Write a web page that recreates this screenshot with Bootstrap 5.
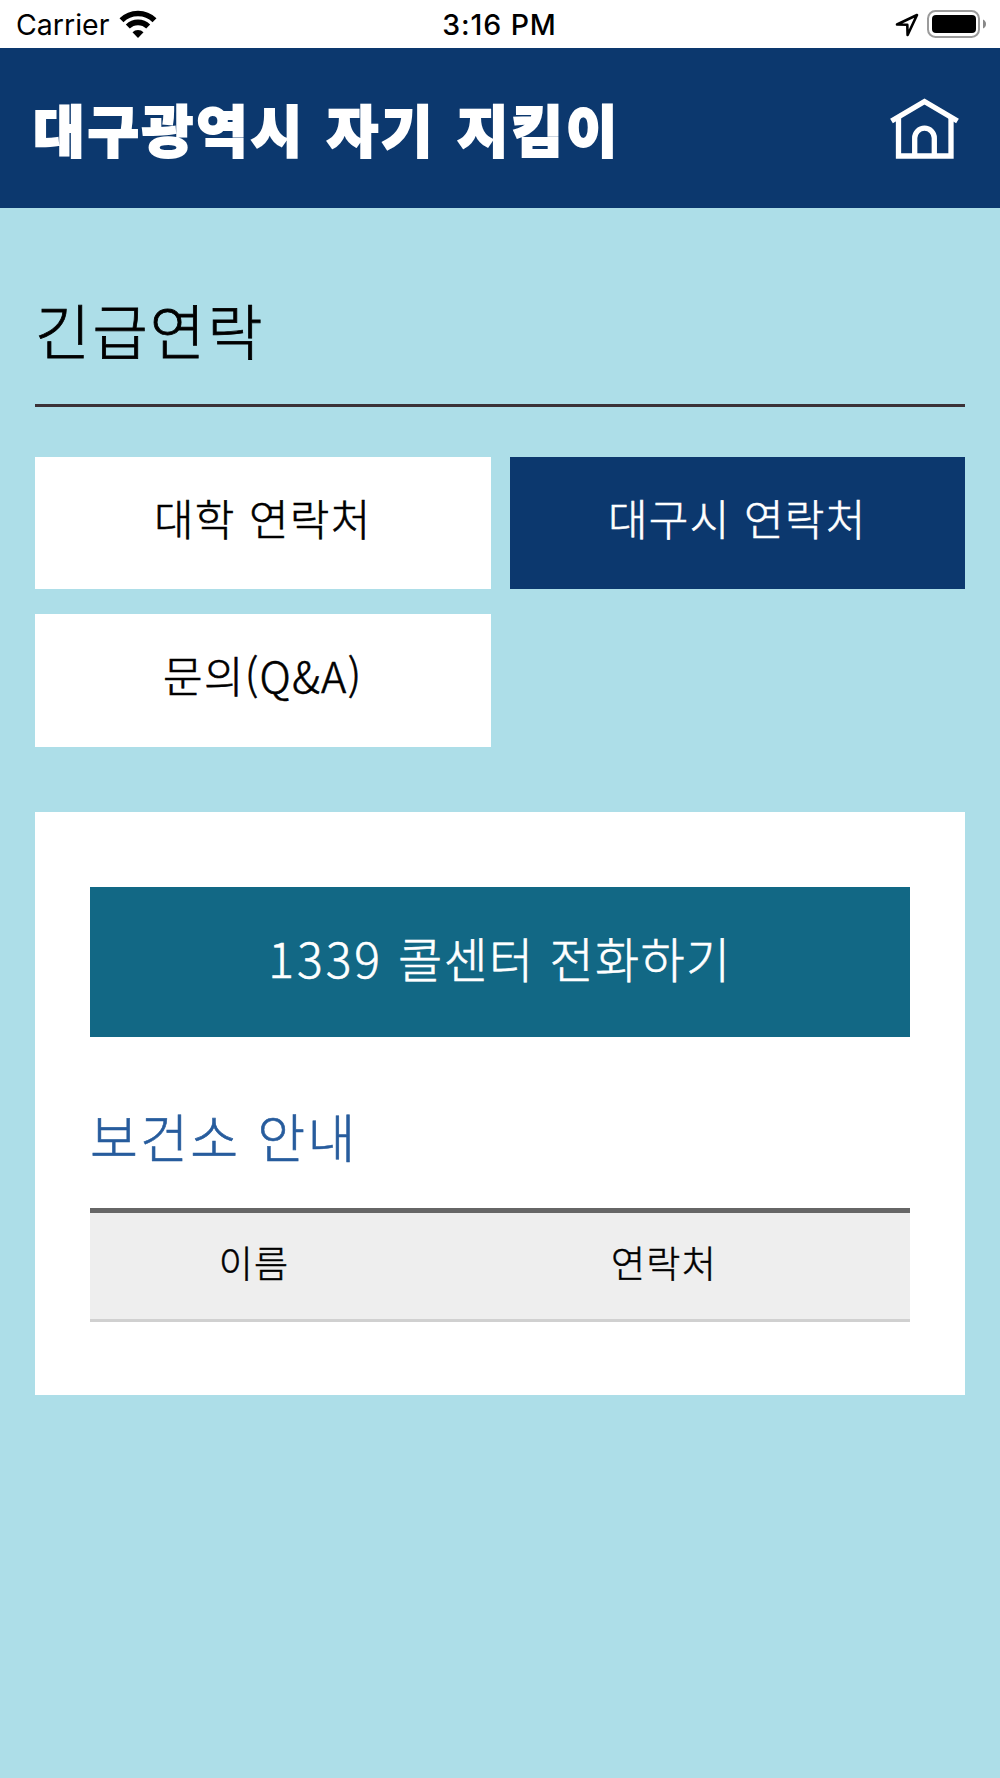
<!DOCTYPE html>
<html lang="ko">

<head>
  <meta charset="UTF-8">
  <meta name="viewport" content="width=device-width, initial-scale=1.0">
  <title>대구광역시 자기 지킴이</title>
  <link href="https://cdn.jsdelivr.net/npm/bootstrap@5.3.3/dist/css/bootstrap.min.css" rel="stylesheet">
  <style>
    body {
      background-color: #addee8;
      color: #000;
      font-family: "Noto Sans CJK KR", sans-serif;
      font-weight: 300;
      line-height: 1;
      min-height: 1778px;
    }
    .status-bar {
      height: 48.4px;
      padding: 2px 13px 0 16px;
      font-family: Inter, sans-serif;
      font-size: 28.5px;
      font-weight: 400;
    }
    .status-bar > div {
      flex: 1 1 0;
    }
    .status-time {
      margin-right: 4px;
      padding-top: 1px;
      font-weight: 500;
      letter-spacing: 0.9px;
    }
    .site-header {
      height: 159.8px;
      padding: 1px 40px 0 33px;
      background-color: #0c386e;
    }
    .site-title {
      padding-bottom: 3px;
      font-size: 56px;
      font-weight: 900;
      color: #fff;
      -webkit-text-stroke: 1.8px #fff;
      letter-spacing: 2.9px;
      word-spacing: 3px;
    }
    .page-body {
      padding: 91px 35px 0;
    }
    .page-title {
      height: 108px;
      margin-bottom: 49.5px;
      border-bottom: 3px solid #3b3237;
      font-size: 60px;
      font-weight: 300;
      letter-spacing: 2.2px;
      line-height: 1;
      -webkit-text-stroke: 0.8px currentColor;
    }
    .tab-grid {
      --bs-gutter-x: 19px;
      --bs-gutter-y: 25px;
    }
    .tab-link {
      height: 132.5px;
      padding: 39px 0 0;
      border: 0;
      border-radius: 0;
      background-color: #fff;
      color: #000;
      font-size: 43px;
      font-weight: 300;
      line-height: 1;
      letter-spacing: 1.3px;
      -webkit-text-stroke: 0.6px currentColor;
    }
    .tab-link.active {
      background-color: #0c386e;
      color: #fff;
    }
    .contact-panel {
      height: 582.5px;
      margin-top: 65.5px;
      padding: 75px 55px 0;
    }
    .call-btn {
      height: 149.5px;
      padding: 46px 0 0;
      border: 0;
      border-radius: 0;
      background-color: #126885;
      color: #fff;
      font-size: 48px;
      font-weight: 300;
      line-height: 1;
      letter-spacing: 1.4px;
      -webkit-text-stroke: 0.6px currentColor;
    }
    .call-number {
      letter-spacing: 3px;
    }
    .section-title {
      margin: 73px 0 46px;
      font-size: 52px;
      font-weight: 300;
      line-height: 1;
      letter-spacing: 2.3px;
      color: #275c9d;
      -webkit-text-stroke: 0.6px currentColor;
    }
    .contact-table {
      table-layout: fixed;
      border-top: 5px solid #666;
      font-size: 37px;
    }
    .contact-table th {
      height: 110px;
      padding: 31px 0 0;
      background-color: #eee;
      border-bottom: 3px solid #d0d0d0;
      font-weight: 300;
      line-height: 1;
      letter-spacing: 1.3px;
      color: #000;
      vertical-align: top;
      -webkit-text-stroke: 0.5px currentColor;
    }
  </style>
</head>

<body>
  <div class="status-bar d-flex align-items-center bg-white">
    <div class="d-flex align-items-center">
      <span>Carrier</span>
      <svg width="38" height="28" viewBox="0 0 38 28" style="margin: -3px 0 0 10px">
        <g fill="none" stroke="#000" stroke-width="5.6">
          <path d="M2.5 10.2 A23.5 23.5 0 0 1 35.5 10.2" />
          <path d="M8.8 16.6 A14.5 14.5 0 0 1 29.2 16.6" />
        </g>
        <path d="M19 28 L13.5 22.2 A7.8 7.8 0 0 1 24.5 22.2 Z" />
      </svg>
    </div>
    <span class="status-time">3:16 PM</span>
    <div class="d-flex align-items-center justify-content-end">
      <svg width="24" height="24" viewBox="0 0 24 24" style="margin-right: 8px">
        <path d="M2 11.5 L22 2 L12.6 22 L12.3 11.8 Z" fill="none" stroke="#000" stroke-width="2.6" stroke-linejoin="round" />
      </svg>
      <svg width="60" height="28" viewBox="0 0 60 28" style="margin-top: -2px">
        <rect x="1" y="1" width="51" height="26" rx="7.5" fill="none" stroke="#9b9b9b" stroke-width="2" />
        <rect x="5" y="5" width="44" height="18" rx="4" />
        <path d="M56 9.5 Q59 11 59 14 Q59 17 56 18.5 Z" fill="#888" />
      </svg>
    </div>
  </div>

  <header class="site-header d-flex align-items-center justify-content-between">
    <h1 class="site-title mb-0">대구광역시 자기 지킴이</h1>
    <a href="#" aria-label="홈">
      <svg class="d-block" width="70" height="62" viewBox="0 0 70 62" fill="none" stroke="#fff" stroke-width="5.3">
        <path d="M1.5 23 L34.5 3.5 L67.5 23" />
        <path d="M8.5 19 V58 H61 V19" />
        <path d="M24.7 58 V40 A9.8 9.8 0 0 1 44.3 40 V58" />
      </svg>
    </a>
  </header>

  <main class="page-body">
    <h2 class="page-title">긴급연락</h2>

    <div class="row tab-grid">
      <div class="col-6"><a href="#" class="btn tab-link d-block">대학 연락처</a></div>
      <div class="col-6"><a href="#" class="btn tab-link d-block active">대구시 연락처</a></div>
      <div class="col-6"><a href="#" class="btn tab-link d-block">문의(Q&amp;A)</a></div>
    </div>

    <section class="contact-panel bg-white">
      <a href="#" class="btn call-btn d-block"><span class="call-number">1339</span> 콜센터 전화하기</a>
      <h3 class="section-title">보건소 안내</h3>
      <table class="contact-table w-100 text-center">
        <colgroup>
          <col style="width: 40%">
          <col style="width: 60%">
        </colgroup>
        <thead>
          <tr>
            <th>이름</th>
            <th>연락처</th>
          </tr>
        </thead>
      </table>
    </section>
  </main>

  <script src="https://cdn.jsdelivr.net/npm/bootstrap@5.3.3/dist/js/bootstrap.bundle.min.js"></script>
</body>

</html>
